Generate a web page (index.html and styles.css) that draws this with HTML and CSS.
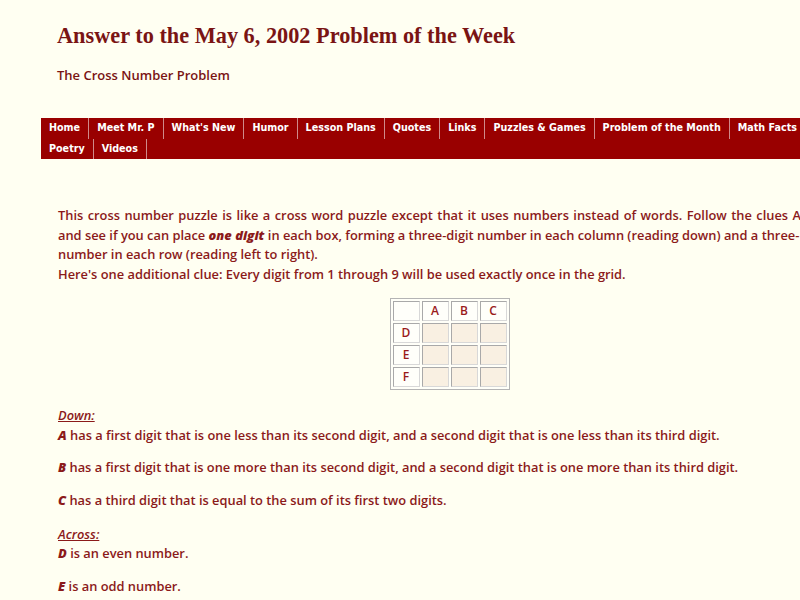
FILE: index.html
```html
<!DOCTYPE html>
<html>
<head>
<meta charset="utf-8">
<title>Answer to the May 6, 2002 Problem of the Week</title>
<link rel="stylesheet" href="styles.css">
</head>
<body>
<div class="page">
  <header class="masthead">
    <h1 class="title">Answer to the May 6, 2002 Problem of the Week</h1>
    <p class="subtitle">The Cross Number Problem</p>
  </header>
  <nav class="nav">
    <a href="#">Home</a><a href="#">Meet Mr. P</a><a href="#">What's New</a><a href="#">Humor</a><a href="#">Lesson Plans</a><a href="#">Quotes</a><a href="#">Links</a><a href="#">Puzzles &amp; Games</a><a href="#">Problem of the Month</a><a href="#">Math Facts</a><span class="nav-break"></span><a href="#">Poetry</a><a href="#">Videos</a>
  </nav>
  <main class="content">
    <p class="intro"><span class="wide">This cross number puzzle is like a cross word puzzle except that it uses numbers instead of words. Follow the clues Across</span><br>and see if you can place <b><i>one digit</i></b> in each box, forming a three-digit number in each column (reading down) and a three-<br>number in each row (reading left to right).<br>Here's one additional clue: Every digit from 1 through 9 will be used exactly once in the grid.</p>
    <table class="grid">
      <tr><td class="head"></td><td class="head">A</td><td class="head">B</td><td class="head">C</td></tr>
      <tr><td class="head">D</td><td></td><td></td><td></td></tr>
      <tr><td class="head">E</td><td></td><td></td><td></td></tr>
      <tr><td class="head">F</td><td></td><td></td><td></td></tr>
    </table>
    <p><u><i>Down:</i></u><br><b><i>A</i></b> has a first digit that is one less than its second digit, and a second digit that is one less than its third digit.</p>
    <p><b><i>B</i></b> has a first digit that is one more than its second digit, and a second digit that is one more than its third digit.</p>
    <p class="last-down"><b><i>C</i></b> has a third digit that is equal to the sum of its first two digits.</p>
    <p class="across"><u><i>Across:</i></u><br><b><i>D</i></b> is an even number.</p>
    <p><b><i>E</i></b> is an odd number.</p>
  </main>
</div>
</body>
</html>
```

FILE: styles.css
```css
html, body {
  margin: 0;
  padding: 0;
  overflow: hidden;
  background: #fffff2;
}
body {
  font-family: "Open Sans", "DejaVu Sans", sans-serif;
  color: #8b1a1a;
}
.page {
  width: 817px;
  padding: 23px 0 0 41px;
}
.masthead {
  padding-left: 16px;
}
.title {
  margin: 0;
  font-family: "Liberation Serif", "Times New Roman", serif;
  font-weight: bold;
  font-size: 22.3px;
  line-height: 26px;
  color: #7a1414;
}
.subtitle {
  margin: 16px 0 0;
  font-size: 13px;
  font-weight: 600;
  line-height: 20px;
  color: #7a1414;
}
.nav {
  margin-top: 33px;
  width: 817px;
  background: #990000;
  display: flex;
  flex-wrap: wrap;
}
.nav-break {
  flex-basis: 100%;
  height: 0;
}
.nav a {
  display: block;
  padding: 0 8px;
  height: 20.5px;
  line-height: 20.5px;
  border-right: 1px solid #cf8a8a;
  color: #ffffff;
  text-decoration: none;
  font-family: "DejaVu Sans", "Verdana", sans-serif;
  font-weight: bold;
  font-size: 9.6px;
}
.content {
  width: 783px;
  padding: 47px 0 0 17px;
}
.content p {
  margin: 0 0 12.5px;
  font-size: 12.85px;
  font-weight: 600;
  line-height: 20px;
  white-space: nowrap;
}
.content p.intro {
  margin-bottom: 13px;
  line-height: 19.7px;
}
.intro .wide {
  word-spacing: 1.1px;
}
.grid {
  margin: 0 auto 15px;
  border: 1px solid #b4b4b4;
  border-spacing: 2px;
  background: #fffff8;
}
.grid td {
  width: 25px;
  height: 18px;
  padding: 0;
  border: 1px solid #a9a9a9;
  border-right-color: #d8d8d8;
  border-bottom-color: #d8d8d8;
  background: #f9f0e2;
  text-align: center;
  font-size: 12px;
  font-weight: 600;
  color: #9a1a1a;
}
.grid td.head {
  background: #fffffa;
}
.content p.last-down {
  margin-bottom: 15.5px;
}
.content p.across {
  line-height: 19px;
  margin-bottom: 13px;
}
```
